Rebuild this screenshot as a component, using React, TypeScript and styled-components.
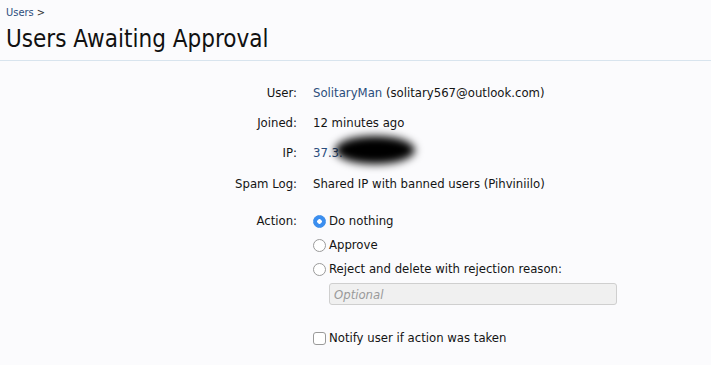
import styled, { createGlobalStyle } from 'styled-components';

const GlobalStyle = createGlobalStyle`
    html, body {
        margin: 0;
        background: #fbfbfd;
    }
    body {
        font-family: 'DejaVu Sans Condensed', 'DejaVu Sans', sans-serif;
        color: #141414;
    }
`;

const Page = styled.div`
    width: 711px;
    height: 365px;
    overflow: hidden;
`;

const Header = styled.header`
    padding: 6px 0 0 6px;
    border-bottom: 1px solid #d8e4ee;
`;

const Breadcrumb = styled.div`
    font-size: 11px;
    line-height: 14px;
    color: #2b4d7c;
    & > span {
        color: #333;
        margin-left: 3px;
    }
`;

const Title = styled.h1`
    margin: 0;
    padding: 5px 0 7px;
    font-size: 24px;
    font-weight: normal;
    line-height: 28px;
    color: #111;
`;

const Form = styled.div`
    display: grid;
    grid-template-columns: 297px 1fr;
    column-gap: 16px;
    padding-top: 24px;
    font-size: 13px;
    line-height: 16px;
`;

const Label = styled.div<{ $gap?: number }>`
    text-align: right;
    padding-bottom: ${({ $gap }) => $gap ?? 14}px;
`;

const Value = styled.div<{ $gap?: number }>`
    position: relative;
    padding-bottom: ${({ $gap }) => $gap ?? 14}px;
`;

const Link = styled.a`
    color: #2b4d7c;
    text-decoration: none;
`;

const Redaction = styled.div`
    position: absolute;
    left: 22px;
    top: -9px;
    width: 80px;
    height: 28px;
    border-radius: 50%;
    background: #000;
    filter: blur(4px);
`;

const Options = styled.div`
    display: flex;
    flex-direction: column;
    gap: 8px;
`;

const Option = styled.label`
    display: flex;
    align-items: center;
    gap: 3px;
`;

const Radio = styled.span<{ $checked?: boolean }>`
    width: 13px;
    height: 13px;
    border-radius: 50%;
    box-sizing: border-box;
    flex-shrink: 0;
    border: 1px solid ${({ $checked }) => ($checked ? '#3d8ee9' : '#9a9a9a')};
    background: ${({ $checked }) =>
        $checked ? 'radial-gradient(circle, #fff 0 2px, #3b8ef0 2.5px)' : '#fff'};
`;

const Checkbox = styled.span`
    width: 13px;
    height: 13px;
    border-radius: 3px;
    box-sizing: border-box;
    flex-shrink: 0;
    border: 1px solid #9a9a9a;
    background: #fff;
`;

const ReasonInput = styled.input`
    margin: -2px 0 0 16px;
    width: 288px;
    height: 22px;
    box-sizing: border-box;
    border: 1px solid #cfcfcf;
    border-radius: 3px;
    background: #f0f0f0;
    padding: 0 4px;
    font-family: inherit;
    font-size: 13px;
    &::placeholder {
        color: #9a9a9a;
        font-style: italic;
    }
`;

const NotifyRow = styled.div`
    grid-column: 2;
    padding-top: 11px;
`;

export default function App() {
    return (
        <Page>
            <GlobalStyle />
            <Header>
                <Breadcrumb>
                    Users<span>&gt;</span>
                </Breadcrumb>
                <Title>Users Awaiting Approval</Title>
            </Header>
            <Form>
                <Label>User:</Label>
                <Value>
                    <Link href="#">SolitaryMan</Link> (solitary567@outlook.com)
                </Value>
                <Label>Joined:</Label>
                <Value>12 minutes ago</Value>
                <Label $gap={15}>IP:</Label>
                <Value $gap={15}>
                    <Link href="#">37.3.</Link>
                    <Redaction />
                </Value>
                <Label $gap={21}>Spam Log:</Label>
                <Value $gap={21}>Shared IP with banned users (Pihviniilo)</Value>
                <Label>Action:</Label>
                <Value>
                    <Options>
                        <Option>
                            <Radio $checked />
                            Do nothing
                        </Option>
                        <Option>
                            <Radio />
                            Approve
                        </Option>
                        <Option>
                            <Radio />
                            Reject and delete with rejection reason:
                        </Option>
                        <ReasonInput placeholder="Optional" />
                    </Options>
                </Value>
                <NotifyRow>
                    <Option>
                        <Checkbox />
                        Notify user if action was taken
                    </Option>
                </NotifyRow>
            </Form>
        </Page>
    );
}
